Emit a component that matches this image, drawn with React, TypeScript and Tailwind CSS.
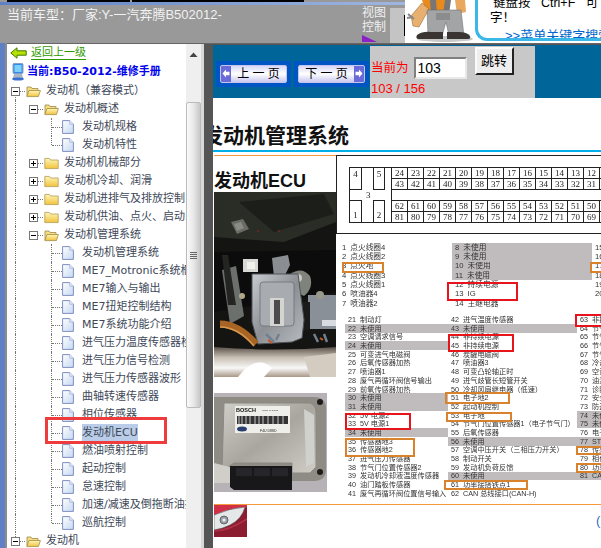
import React from "react";

const UI = { fontFamily: '"DejaVu Sans", "Noto Sans CJK SC", sans-serif' };
const CJK = { fontFamily: '"Liberation Sans", "Noto Sans CJK SC", sans-serif' };

type Node = { l: 0 | 1 | 2; k: "minus" | "plus" | "file"; t: string; end?: boolean; top?: boolean; last?: boolean; sel?: boolean };

const tree: Node[] = [
  { l: 0, k: "minus", t: "发动机（兼容模式）", top: true },
  { l: 1, k: "minus", t: "发动机概述" },
  { l: 2, k: "file", t: "发动机规格" },
  { l: 2, k: "file", t: "发动机特性", end: true },
  { l: 1, k: "plus", t: "发动机机械部分" },
  { l: 1, k: "plus", t: "发动机冷却、润滑" },
  { l: 1, k: "plus", t: "发动机进排气及排放控制系统" },
  { l: 1, k: "plus", t: "发动机供油、点火、启动系统" },
  { l: 1, k: "minus", t: "发动机管理系统" },
  { l: 2, k: "file", t: "发动机管理系统" },
  { l: 2, k: "file", t: "ME7_Motronic系统框图" },
  { l: 2, k: "file", t: "ME7输入与输出" },
  { l: 2, k: "file", t: "ME7扭矩控制结构" },
  { l: 2, k: "file", t: "ME7系统功能介绍" },
  { l: 2, k: "file", t: "进气压力温度传感器检测" },
  { l: 2, k: "file", t: "进气压力信号检测" },
  { l: 2, k: "file", t: "进气压力传感器波形" },
  { l: 2, k: "file", t: "曲轴转速传感器" },
  { l: 2, k: "file", t: "相位传感器" },
  { l: 2, k: "file", t: "发动机ECU", sel: true },
  { l: 2, k: "file", t: "燃油喷射控制" },
  { l: 2, k: "file", t: "起动控制" },
  { l: 2, k: "file", t: "怠速控制" },
  { l: 2, k: "file", t: "加速/减速及倒拖断油控制" },
  { l: 2, k: "file", t: "巡航控制", end: true },
  { l: 0, k: "minus", t: "发动机", last: true },
];

function Folder({ open }: { open: boolean }) {
  return (
    <svg width="15" height="14" viewBox="0 0 15 14" className="shrink-0">
      <defs>
        <linearGradient id="fg" x1="0" y1="0" x2="0" y2="1">
          <stop offset="0" stopColor="#fff6b8" />
          <stop offset="1" stopColor="#f2c23c" />
        </linearGradient>
      </defs>
      {open ? (
        <>
          <path d="M1 12V3h4l1 1.5h6V7" fill="#f7dd7c" stroke="#9a8a50" strokeWidth="0.8" />
          <path d="M0.8 12.6 3 6.5h11.4l-2 6.1z" fill="url(#fg)" stroke="#a08c48" strokeWidth="0.8" />
        </>
      ) : (
        <path d="M0.8 12.6V2.4h4.6l1.2 1.6h7.6v8.6z" fill="url(#fg)" stroke="#b09a55" strokeWidth="0.8" />
      )}
    </svg>
  );
}

function FileIcon() {
  return (
    <svg width="12" height="14" viewBox="0 0 12 14" className="shrink-0">
      <defs>
        <linearGradient id="fi" x1="0" y1="0" x2="1" y2="1">
          <stop offset="0" stopColor="#ffffff" />
          <stop offset="1" stopColor="#c4d8f4" />
        </linearGradient>
      </defs>
      <path d="M0.6 0.6h7.2l3.6 3.6v9.2H0.6z" fill="url(#fi)" stroke="#7f8fc0" strokeWidth="1" />
      <path d="M7.8 0.6v3.6h3.6" fill="#e6eefb" stroke="#9aa8d0" strokeWidth="0.7" />
    </svg>
  );
}

function Box({ plus }: { plus: boolean }) {
  return (
    <span className="absolute left-[4px] top-[5px] w-[9px] h-[9px] bg-white border border-[#777] flex items-center justify-center">
      <span className="relative w-[5px] h-[1px] bg-black">
        {plus && <span className="absolute left-[2px] top-[-2px] w-[1px] h-[5px] bg-black" />}
      </span>
    </span>
  );
}

const vLine = "absolute left-[8px] border-l border-dotted border-[#777]";
const hLine = "absolute left-[9px] top-[9px] h-0 border-t border-dotted border-[#777]";

function TreeRow({ n }: { n: Node }) {
  const isBranch = n.k !== "file";
  return (
    <div className="flex items-center h-[18px] whitespace-nowrap text-[11px] text-[#404858]">
      <span className="relative w-[18px] h-full shrink-0">
        {n.l === 0 ? (
          <>
            <span className={`${vLine} ${n.top ? "top-[9px] bottom-0" : n.last ? "top-0 h-[5px]" : "top-0 bottom-0"}`} />
            <span className={`${hLine} w-[9px]`} />
            <Box plus={false} />
          </>
        ) : (
          <span className={`${vLine} top-0 bottom-0`} />
        )}
      </span>
      {n.l >= 1 && (
        <span className="relative w-[18px] h-full shrink-0">
          {n.l === 1 && (
            <>
              <span className={`${hLine} w-[9px]`} />
              <Box plus={n.k === "plus"} />
            </>
          )}
        </span>
      )}
      {n.l === 2 && (
        <span className="relative w-[18px] h-full shrink-0">
          <span className={`${vLine} top-0 ${n.end ? "h-[9px]" : "bottom-0"}`} />
          <span className={`${hLine} w-[10px]`} />
        </span>
      )}
      <span className="ml-[1px] flex items-center shrink-0">
        {isBranch ? <Folder open={n.k === "minus"} /> : <FileIcon />}
      </span>
      <span className={`${isBranch ? "ml-[5px]" : "ml-[8px]"} ${n.sel ? "bg-[#b9cde8] py-[1px]" : ""}`}>{n.t}</span>
    </div>
  );
}

function Sidebar() {
  return (
    <div className="relative flex w-[197px] shrink-0 bg-white overflow-hidden" style={UI}>
      <div className="w-[179px] shrink-0 overflow-hidden">
        <div className="flex items-center h-[17px] pl-[3px]">
          <svg width="17" height="12" viewBox="0 0 17 12" className="shrink-0">
            <path d="M0.8 6 7 0.8v3h9.2v4.4H7v3z" fill="#b8e000" stroke="#3c7a00" strokeWidth="1" />
          </svg>
          <span className="ml-[4px] text-[11px] leading-[13px] text-[#2f9a00] border-b border-[#2f9a00] whitespace-nowrap">返回上一级</span>
        </div>
        <div className="flex items-center h-[21px] pl-[4px] pt-[1px]">
          <svg width="14" height="18" viewBox="0 0 14 18" className="shrink-0">
            <rect x="2" y="0.5" width="10" height="10" rx="1" fill="#2f8af0" stroke="#8aa0c0" />
            <rect x="3.5" y="2" width="7" height="7" fill="#7fd0ff" />
            <path d="M3 11h8l1 4H2z" fill="#aab4c4" />
            <ellipse cx="7" cy="16" rx="6" ry="1.6" fill="#3b6fd0" />
          </svg>
          <span className="ml-[2px] text-[11px] font-bold text-[#0000ee] whitespace-nowrap">当前:B50-2012-维修手册</span>
        </div>
        {tree.map((n, i) => (
          <TreeRow key={i} n={n} />
        ))}
      </div>
      <div className="flex flex-col w-[15px] shrink-0 bg-[#efefef] items-center">
        <svg width="9" height="5" viewBox="0 0 9 5" className="mt-[8px] shrink-0">
          <path d="M0.5 5 4.5 0.5 8.5 5z" fill="#444" />
        </svg>
        <div className="mt-[45px] w-[15px] h-[306px] bg-gradient-to-r from-[#fafafa] via-[#e8e8e8] to-[#c8c8c8] border border-[#bbb] rounded-[2px] flex flex-col items-center justify-center gap-[1px]">
          <span className="w-[7px] h-[1px] bg-[#666]" />
          <span className="w-[7px] h-[1px] bg-[#666]" />
          <span className="w-[7px] h-[1px] bg-[#666]" />
          <span className="w-[7px] h-[1px] bg-[#666]" />
        </div>
      </div>
      <div className="w-[3px] shrink-0 bg-[#d8d8d8]" />
      <div className="absolute left-[38px] top-[373px] w-[122px] h-[27px] border-[3px] border-[#ee3b3b]" />
    </div>
  );
}

function Mechanic() {
  return (
    <svg width="70" height="43" viewBox="0 0 70 43" className="shrink-0">
      <ellipse cx="40" cy="39" rx="28" ry="3" fill="#c8c8c8" />
      <path d="M17 0 L45 0 L42 14 L22 14z" fill="#e88a1c" />
      <path d="M50 0h10l1 12-9 2z" fill="#e8a860" />
      <path d="M25 0 h6 l1 14h-6z M40 0h6l-2 14h-6z" fill="#777" />
      <path d="M6 16 L17 3 L24 9 L14 27 L8 26z" fill="#e8b070" stroke="#8a5a20" strokeWidth="0.5" />
      <path d="M3 14 l6 5 M2 18 l6 -1" stroke="#888" strokeWidth="2" />
      <path d="M22 10 h34 l3 26 h-15 l-3 -14 l-4 14 h-14z" fill="#a2a4a6" stroke="#666" strokeWidth="0.5" />
      <rect x="31" y="13" width="14" height="7" fill="#8a8c8e" />
      <path d="M12 35 q6 -4 14 -3 l12 0 v7 h-24 q-4 0 -2 -4z" fill="#3a3432" />
      <path d="M42 32 h12 q8 0 11 4 q1 3 -2 3 h-21z" fill="#3a3432" />
    </svg>
  );
}

function TopBar() {
  return (
    <div className="flex h-[43px] shrink-0 bg-[#999999]" style={CJK}>
      <div className="flex flex-col w-[405px] shrink-0">
        <div className="flex h-[5px] shrink-0 flex-col">
          <div className="h-[2px] flex pl-[7px]">
            <span className="w-[123px] bg-black" />
            <span className="w-[2px]" />
            <span className="w-[172px] bg-black" />
          </div>
          <div className="h-[3px] bg-gradient-to-r from-[#5f80c4] to-[#9fb6e0]" />
        </div>
        <div className="flex flex-1 min-h-0">
          <div className="w-[355px] shrink-0 pl-[7px] pt-[2px] text-[13px] leading-[16px] text-[#f2f2f2] whitespace-nowrap overflow-hidden">
            当前车型：厂家:Y-一汽奔腾B502012-
          </div>
          <div className="flex flex-col w-[35px] shrink-0 pl-[7px]">
            <span className="text-[12px] leading-[14px] text-[#f0f0f0] whitespace-nowrap pt-[1px]">视图<br />控制</span>
            <svg width="16" height="7" viewBox="0 0 16 7" className="mt-[1px] shrink-0">
              <path d="M0 0 L15 7 H0z" fill="#8a20c8" />
            </svg>
          </div>
          <div className="flex-1 mt-[3px] bg-[#c4c4c4] flex justify-end py-[7px]">
            <span className="w-[1px] bg-black" />
          </div>
        </div>
      </div>
      <div className="flex flex-1 min-w-0 bg-white overflow-hidden">
        <Mechanic />
        <div className="relative flex-1 min-w-0 h-[41px] pl-[15px] border-l-[3px] border-b-[3px] border-[#3ab8e8] rounded-bl-[12px] overflow-hidden whitespace-nowrap text-[12.5px] leading-[14px] text-black">
          <div className="-mt-[4px]">键盘按&nbsp;&nbsp;&nbsp;Ctrl+F&nbsp;&nbsp;&nbsp;可</div>
          <div className="-ml-[3px] pt-[1px]">字！</div>
          <div className="pl-[15px] text-[13px] leading-[15px] pt-[3px] text-[#0066cc] border-b border-[#0066cc] -ml-[3px]">&gt;&gt;菜单关键字搜索</div>
        </div>
      </div>
    </div>
  );
}

function PageButton({ label, dir }: { label: string; dir: "l" | "r" }) {
  const arrow = (
    <span className="w-[10px] self-stretch bg-[#6a6ad8] flex items-center justify-center">
      <svg width="8" height="9" viewBox="0 0 8 9">
        <path d={dir === "l" ? "M0.5 4.5 4 0.5v2.2h3.5v3.6H4v2.2z" : "M7.5 4.5 4 0.5v2.2H0.5v3.6H4v2.2z"} fill="#fff" />
      </svg>
    </span>
  );
  return (
    <div className="border-[4px] border-[#0055c4] w-[75px] h-[26px] shrink-0">
      <div className="flex items-center h-full rounded-[2px] overflow-hidden border border-[#c4c4ee] bg-gradient-to-b from-[#d8d8f8] via-white to-[#c8c8f0]">
        {dir === "l" && arrow}
        <span className="flex-1 text-center text-[12px] leading-none text-black whitespace-nowrap">{label}</span>
        {dir === "r" && arrow}
      </div>
    </div>
  );
}

function Toolbar() {
  return (
    <div className="flex h-[53px] shrink-0 bg-[#006699]" style={CJK}>
      <div className="flex items-center gap-[3px] pl-[3px] pt-[4px] w-[157px] shrink-0">
        <PageButton label="上 一  页" dir="l" />
        <PageButton label="下 一  页" dir="r" />
      </div>
      <div className="flex w-[165px] h-[52px] mt-[1px] bg-[#c8c8c8]">
        <div className="flex flex-col pl-[1px]">
          <div className="flex items-center pt-[11px]">
            <span className="text-[12.5px] leading-[22px] text-[#ff0000] whitespace-nowrap">当前为</span>
            <div className="ml-[5px] w-[53px] h-[22px] bg-white border-2 border-t-[#808080] border-l-[#808080] border-r-[#e8e8e8] border-b-[#e8e8e8] pl-[2px] text-[14px] leading-[18px] text-black">103</div>
          </div>
          <span className="text-[13px] leading-[16px] pt-[2px] text-[#ff0000] whitespace-nowrap">103 / 156</span>
        </div>
        <div className="ml-[8px] mt-[1px] w-[39px] h-[28px] bg-[#eeeeee] border-2 border-t-[#fafafa] border-l-[#fafafa] border-r-[#222] border-b-[#222] flex items-center justify-center text-[13px] text-black">跳转</div>
      </div>
    </div>
  );
}

function Photo1() {
  return (
    <svg width="122" height="185" viewBox="0 0 122 185" className="block shrink-0 blur-[0.4px]">
      <defs>
        <linearGradient id="pipe" x1="0" y1="0" x2="0" y2="1">
          <stop offset="0" stopColor="#5a5048" />
          <stop offset="0.35" stopColor="#c8c0b4" />
          <stop offset="0.7" stopColor="#f8f8f8" />
          <stop offset="1" stopColor="#a89888" />
        </linearGradient>
        <linearGradient id="ecu1" x1="0" y1="0" x2="1" y2="1">
          <stop offset="0" stopColor="#c8ccd0" />
          <stop offset="0.5" stopColor="#8c9094" />
          <stop offset="1" stopColor="#b8bcc0" />
        </linearGradient>
      </defs>
      <rect width="122" height="185" fill="#141512" />
      <path d="M0 0h122v30L70 50 0 45z" fill="#2a2c26" />
      <path d="M25 10 L110 2 L120 22 L60 40z" fill="#1c1e1a" />
      <path d="M17 30 l12 -3 6 10 -12 5z" fill="#6a6c64" />
      <path d="M20 32 l7 -2 3 6 -7 3z" fill="#8a8c84" />
      <circle cx="44" cy="39" r="1" fill="#802020" />
      <circle cx="65" cy="39" r="1" fill="#802020" />
      <path d="M0 60 L122 58 V100 L0 120z" fill="#0c0c0c" />
      <path d="M8 78 l14 -4 8 50 -14 8z" fill="#6c706c" />
      <path d="M8 63h6l8 50h-8z" fill="#242522" />
      <rect x="29" y="67" width="15" height="13" fill="#d8d8d4" />
      <rect x="33" y="70" width="8" height="7" fill="#f0f0ec" />
      <path d="M58 66 l16 -3 2 10 -6 12 -10 0z" fill="#8a8e92" />
      <path d="M76 82 q12 -8 20 2 q4 12 -6 20 l-8 -4z" fill="#80827c" />
      <circle cx="84" cy="86" r="4" fill="#c8c8c4" />
      <rect x="94" y="103" width="28" height="34" fill="#8a9098" />
      <rect x="108" y="128" width="14" height="6" fill="#d8dce0" />
      <circle cx="106" cy="103" r="4" fill="#9a9a8c" />
      <rect x="84" y="110" width="12" height="28" fill="#1a1a1a" />
      <path d="M38 82 h46 l6 46 -2 18 -10 4 -34 2 -6 -22z" fill="url(#ecu1)" stroke="#50545a" strokeWidth="1" />
      <rect x="46" y="90" width="34" height="44" rx="3" fill="#a8acb0" stroke="#6c7074" strokeWidth="0.8" />
      <rect x="56" y="106" width="14" height="28" fill="#d4d4d0" />
      <rect x="60" y="108" width="6" height="24" fill="#4c4c4c" />
      <circle cx="28" cy="104" r="3" fill="#b0a888" />
      <path d="M6 132 Q24 132 42 152" stroke="#a86424" strokeWidth="7" fill="none" />
      <path d="M6 135 Q24 135 40 154" stroke="#d89a50" strokeWidth="1.5" fill="none" />
      <path d="M52 142l8 8M62 148l3-6M100 142l4 8M110 142l3 8" stroke="#708090" strokeWidth="2.5" />
      <path d="M54 148l4 3M106 146l3 2" stroke="#c85820" strokeWidth="2" />
      <path d="M0 155 Q60 160 122 155 V185 H0z" fill="url(#pipe)" />
      <path d="M30 178 q16 -14 28 -2 l-8 9h-26z" fill="#ffffff" />
      <path d="M90 165 l32 -4 v24 h-26z" fill="#d4ccc0" />
    </svg>
  );
}

function Photo2() {
  return (
    <svg width="113" height="99" viewBox="0 0 113 99" className="block shrink-0 blur-[0.3px]" style={{ fontFamily: '"Liberation Sans", sans-serif' }}>
      <defs>
        <linearGradient id="pl" x1="0" y1="0" x2="1" y2="1">
          <stop offset="0" stopColor="#d0cec8" />
          <stop offset="0.5" stopColor="#a8a69e" />
          <stop offset="1" stopColor="#cfcdc6" />
        </linearGradient>
      </defs>
      <rect width="113" height="99" fill="#b6b2b6" />
      <path d="M0 4 H100 Q112 4 112 16 V76 Q112 88 100 88 H0z" fill="#8e8c84" />
      <path d="M10 10 H96 Q102 12 102 20 V74 L96 80 H78 L78 70 H20 L8 78z" fill="url(#pl)" stroke="#8a8880" strokeWidth="1" />
      <path d="M90 16 L100 22 V70 L92 74z" fill="#d0d0cc" />
      <path d="M0 70 L16 74 V90 L0 90z" fill="#d0cec8" />
      <circle cx="106" cy="9" r="3" fill="#1c1c1c" />
      <circle cx="106" cy="79" r="3" fill="#1c1c1c" />
      <rect x="21" y="13" width="55" height="27" fill="#eeeeea" />
      <text x="22" y="19" fontSize="5.5" fontWeight="bold" fill="#111">BOSCH</text>
      <text x="48" y="18" fontSize="2.5" fill="#333">Made in China</text>
      <rect x="23" y="23" width="51" height="8" fill="#333" />
      <path d="M25 23v8M28 23v8M32 23v8M36 23v8M41 23v8M45 23v8M49 23v8M54 23v8M59 23v8M64 23v8M69 23v8" stroke="#eee" strokeWidth="0.8" />
      <ellipse cx="28" cy="36" rx="5" ry="2.5" fill="#2a3f70" />
      <text x="46" y="39" fontSize="3.5" fill="#222">F4U D88D</text>
      <path d="M16 73 H78 V97 H20 L16 94z" fill="#18181a" />
      <path d="M22 75 h16 v8 h-16z M40 75 h16 v8 h-16z M58 75 h16 v8 h-16z" fill="#26262a" />
    </svg>
  );
}

function CarThumb() {
  return (
    <svg width="33" height="32" viewBox="0 0 33 32" className="block shrink-0">
      <rect width="33" height="32" fill="#8c1c30" />
      <path d="M0 0h33v2L20 8 0 14z" fill="#d03048" />
      <path d="M0 10 Q16 3 31 2 Q28 14 16 20 Q8 24 0 25z" fill="#e4e8e8" stroke="#555" strokeWidth="0.6" />
      <circle cx="10" cy="15" r="4" fill="#98a0a4" stroke="#444" strokeWidth="0.7" />
      <circle cx="10" cy="15" r="1.6" fill="#eef" />
      <path d="M0 26 Q14 26 33 14" stroke="#b03048" strokeWidth="1.5" fill="none" />
    </svg>
  );
}

const conn = [24, 23, 22, 21, 20, 19, 18, 17, 16, 15, 14, 13, 12, 11];
const cellCls = "w-[16px] shrink-0 h-[11px] border-r border-b border-[#222] flex items-center justify-center text-[9px] leading-none text-[#222]";

function ConnRow({ from, top }: { from: number; top?: boolean }) {
  return (
    <div className={`flex ${top ? "border-t border-[#222]" : ""}`}>
      {conn.map((_, i) => (
        <span key={i} className={cellCls}>
          {from - i}
        </span>
      ))}
    </div>
  );
}

function Connector() {
  return (
    <div className="flex h-[56px] ml-[12px] mt-[11px] shrink-0 border-l border-[#222] blur-[0.25px]" style={{ fontFamily: '"Liberation Serif", serif' }}>
      <div className="relative w-[42px] shrink-0 border-t border-b border-[#222] text-[9px] text-[#222]">
        <span className="absolute left-0 top-0 w-[12px] h-[22px] border-r border-b border-[#222] text-center">4</span>
        <span className="absolute left-[23px] top-0 w-[12px] h-[22px] border-l border-r border-b border-[#222] text-center">5</span>
        <span className="absolute left-0 bottom-0 w-[12px] h-[22px] border-r border-t border-[#222] text-center pt-[8px]">1</span>
        <span className="absolute left-[23px] bottom-0 w-[12px] h-[22px] border-l border-r border-t border-[#222] text-center pt-[8px]">2</span>
        <span className="absolute left-[16px] top-[21px]">3</span>
        <span className="absolute right-0 top-0 bottom-0 w-[1px] bg-[#222]" />
      </div>
      <div className="flex flex-col justify-between">
        <div>
          <ConnRow from={24} top />
          <ConnRow from={43} />
        </div>
        <div>
          <ConnRow from={62} top />
          <ConnRow from={81} />
        </div>
      </div>
    </div>
  );
}

type Pin = [number, string, boolean?];

function PinCol({ pins, w, rh, size }: { pins: Pin[]; w: string; rh: string; size: string }) {
  return (
    <div className={`flex flex-col shrink-0 ${w}`}>
      {pins.map(([n, t, g]) => (
        <div
          key={n}
          className={`${rh} ${size} flex items-center gap-[4px] pl-[3px] whitespace-nowrap overflow-hidden leading-none text-[#333] ${g ? "bg-[#c0bcbe]" : ""}`}
        >
          <span>{n}</span>
          <span>{t}</span>
        </div>
      ))}
    </div>
  );
}

const c1: Pin[] = [[1, "点火线圈4"], [2, "点火线圈2"], [3, "点火地"], [4, "点火线圈3"], [5, "点火线圈1"], [6, "喷油器4"], [7, "喷油器2"]];
const c2: Pin[] = [[8, "未使用", true], [9, "未使用", true], [10, "未使用", true], [11, "未使用", true], [12, "持续电源"], [13, "IG"], [14, "主继电器"]];
const c3: Pin[] = [[15, ""], [16, ""], [17, ""], [18, ""], [19, ""], [20, ""]];
const a: Pin[] = [[21, "制动灯"], [22, "未使用", true], [23, "空调请求信号"], [24, "未使用", true], [25, "可变进气电磁阀"], [26, "后氧传感器加热"], [27, "喷油器1"], [28, "废气再循环阀信号输出"], [29, "前氧传感器加热"], [30, "未使用", true], [31, "未使用", true], [32, "5V 电源2"], [33, "5V 电源1"], [34, "未使用", true], [35, "传感器地3"], [36, "传感器地2"], [37, "进气压力传感器"], [38, "节气门位置传感器2"], [39, "发动机冷却液温度传感器"], [40, "油门踏板传感器"], [41, "废气再循环阀位置信号输入"]];
const b: Pin[] = [[42, "进气温度传感器"], [43, "未使用", true], [44, "非持续电源"], [45, "非持续电源"], [46, "炭罐电磁阀"], [47, "喷油器3"], [48, "可变凸轮轴正时"], [49, "进气歧管长短管开关"], [50, "冷却风扇继电器（低速）"], [51, "电子地2"], [52, "起动机控制"], [53, "电子地"], [54, "节气门位置传感器1（电子节气门）"], [55, "后氧传感器"], [56, "未使用", true], [57, "空调中压开关（三相压力开关）"], [58, "制动开关"], [59, "发动机负荷反馈"], [60, "未使用", true], [61, "功率接搭铁点1"], [62, "CAN 总线接口(CAN-H)"]];
const c: Pin[] = [[63, "非持续"], [64, "节气门"], [65, "节气门"], [66, "节气门"], [67, "节气门"], [68, "冷却液"], [69, "空调"], [70, "油泵"], [71, "诊断"], [72, "安全"], [73, "防盗"], [74, "未使用", true], [75, "未使用", true], [76, "电子"], [77, "ST", true], [78, "传感"], [79, "相位"], [80, "功率"], [81, "CAN", true]];

const marks: string[] = [
  "border-[#d8822c] left-[6px] top-[107px] w-[42px] h-[11px]",
  "border-[#d8822c] left-[254px] top-[107px] w-[20px] h-[11px]",
  "border-[#e8141c] left-[111px] top-[127px] w-[71px] h-[19px]",
  "border-[#e8141c] left-[112px] top-[179px] w-[66px] h-[18px]",
  "border-[#e8141c] left-[239px] top-[159px] w-[40px] h-[13px]",
  "border-[#e8141c] left-[9px] top-[258px] w-[66px] h-[17px]",
  "border-[#d8822c] left-[109px] top-[237px] w-[65px] h-[12px]",
  "border-[#d8822c] left-[110px] top-[257px] w-[66px] h-[10px]",
  "border-[#d8822c] left-[9px] top-[283px] w-[70px] h-[19px]",
  "border-[#d8822c] left-[108px] top-[325px] w-[84px] h-[10px]",
  "border-[#d8822c] left-[240px] top-[291px] w-[40px] h-[9px]",
  "border-[#d8822c] left-[240px] top-[308px] w-[40px] h-[10px]",
];

function Document() {
  return (
    <div className="flex-1 min-h-0 bg-white overflow-hidden" style={{ fontFamily: '"Liberation Sans", "Noto Sans CJK SC", sans-serif' }}>
      <div className="h-[52px] flex items-end pb-[1px] -ml-[11px] text-[21px] leading-[26px] font-bold text-[#111] whitespace-nowrap">发动机管理系统</div>
      <div className="h-[2px] bg-[#00aeea]" />
      <div className="h-[3px]" />
      <div className="flex">
        <div className="flex flex-col w-[123px] shrink-0 pl-[1px]">
          <div className="h-[1px] bg-[#f59a3c]" />
          <div className="h-[36px] pt-[14px] text-[18px] leading-[22px] font-bold text-[#111] whitespace-nowrap">发动机ECU</div>
          <Photo1 />
          <div className="h-[16px] shrink-0" />
          <Photo2 />
          <div className="h-[12px] shrink-0" />
          <div className="h-[1px] bg-[#f59a3c] w-[400px]" />
          <CarThumb />
        </div>
        <div className="relative flex-1 min-w-0 overflow-hidden">
          <div className="h-[79px] border-t border-l border-b border-[#222]">
            <Connector />
          </div>
          <div className="flex mt-[9px] pl-[3px] blur-[0.25px]">
            <PinCol pins={c1} w="w-[113px]" rh="h-[9.33px]" size="text-[7.7px]" />
            <PinCol pins={c2} w="w-[140px]" rh="h-[9.33px]" size="text-[7.7px]" />
            <PinCol pins={c3} w="w-[20px]" rh="h-[9.33px]" size="text-[7.7px]" />
          </div>
          <div className="flex mt-[7px] pl-[9px] blur-[0.25px]">
            <PinCol pins={a} w="w-[103px]" rh="h-[8.7px]" size="text-[7.2px]" />
            <PinCol pins={b} w="w-[129px]" rh="h-[8.7px]" size="text-[7.2px]" />
            <PinCol pins={c} w="w-[30px]" rh="h-[8.7px]" size="text-[7.2px]" />
          </div>
          {marks.map((cls, i) => (
            <div key={i} className={`absolute border-2 ${cls}`} />
          ))}
          <span className="absolute left-[260px] top-[359px] text-[13px] leading-none text-[#2a6fc0]">(</span>
        </div>
      </div>
    </div>
  );
}

export default function App() {
  return (
    <div className="flex w-[601px] h-[548px] overflow-hidden bg-[#999999]">
      <div className="w-[7px] shrink-0 flex">
        <div className="w-[5px] bg-[#5f80c4]" />
        <div className="w-[2px] bg-[#8c8c8c]" />
      </div>
      <div className="flex flex-col flex-1 min-w-0 -ml-[7px]">
        <TopBar />
        <div className="h-[1px] shrink-0 bg-[#666666] ml-[7px]" />
        <div className="flex flex-1 min-h-0 pl-[7px]">
          <Sidebar />
          <div className="w-[9px] shrink-0 bg-[#555555]" />
          <div className="flex flex-col flex-1 min-w-0">
            <div className="h-[1px] shrink-0 bg-[#555555]" />
            <Toolbar />
            <Document />
          </div>
        </div>
      </div>
    </div>
  );
}
